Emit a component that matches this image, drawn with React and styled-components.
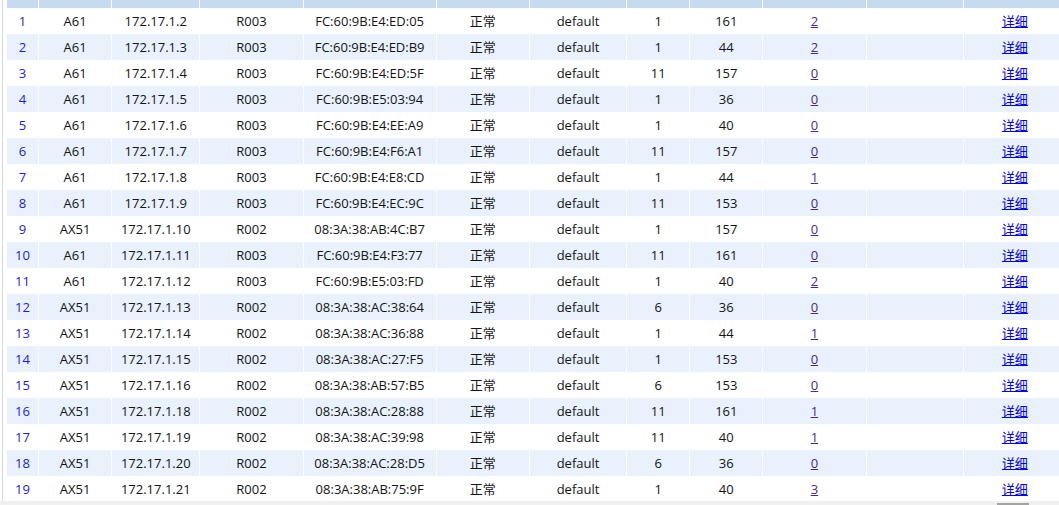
import React from "react";
import styled, { createGlobalStyle } from "styled-components";

const GlobalStyle = createGlobalStyle`
  html, body {
    margin: 0;
    padding: 0;
    background: #ffffff;
    overflow: hidden;
  }
  body {
    font-family: "Open Sans", "Noto Sans CJK SC", sans-serif;
    font-size: 13px;
  }
`;

const Page = styled.div`
  width: 1059px;
  height: 505px;
  display: flex;
  flex-direction: column;
  overflow: hidden;
`;

const Frame = styled.div`
  flex: 1;
  display: flex;
  padding-left: 2px;
  overflow: hidden;
`;

const Scroller = styled.div`
  flex: 1;
  border-left: 1px solid #d9d9d9;
  padding-left: 3px;
  overflow: hidden;
`;

const Table = styled.table`
  table-layout: fixed;
  border-collapse: separate;
  border-spacing: 1px 0;
  background: #ffffff;
  width: 1061px;
`;

const HeadCell = styled.th`
  height: 8px;
  padding: 0;
  background: #c6dbf0;
`;

const Row = styled.tr`
  background: ${(p) => (p.$alt ? "#e8f1fc" : "#ffffff")};
`;

const Cell = styled.td`
  height: 26px;
  padding: 0;
  text-align: center;
  vertical-align: middle;
  color: ${(p) => (p.$index ? "#1c1cdc" : "#141414")};
  white-space: nowrap;
  overflow: hidden;
  line-height: 26px;
`;

const CountLink = styled.a`
  color: #4a2a86;
  text-decoration: underline;
`;

const DetailLink = styled.a`
  color: #0000ee;
  text-decoration: underline;
`;

const Track = styled.div`
  height: 4px;
  background: #f0f0f0;
  display: flex;
  align-items: flex-end;
`;

const Thumb = styled.div`
  margin-left: 997px;
  width: 32px;
  height: 2px;
  background: #a3a3a3;
`;

const widths = [31, 72, 87, 102, 132, 92, 96, 62, 72, 102, 96, 102];

const rows = [
  ["A61", "172.17.1.2", "R003", "FC:60:9B:E4:ED:05", "1", "161", "2"],
  ["A61", "172.17.1.3", "R003", "FC:60:9B:E4:ED:B9", "1", "44", "2"],
  ["A61", "172.17.1.4", "R003", "FC:60:9B:E4:ED:5F", "11", "157", "0"],
  ["A61", "172.17.1.5", "R003", "FC:60:9B:E5:03:94", "1", "36", "0"],
  ["A61", "172.17.1.6", "R003", "FC:60:9B:E4:EE:A9", "1", "40", "0"],
  ["A61", "172.17.1.7", "R003", "FC:60:9B:E4:F6:A1", "11", "157", "0"],
  ["A61", "172.17.1.8", "R003", "FC:60:9B:E4:E8:CD", "1", "44", "1"],
  ["A61", "172.17.1.9", "R003", "FC:60:9B:E4:EC:9C", "11", "153", "0"],
  ["AX51", "172.17.1.10", "R002", "08:3A:38:AB:4C:B7", "1", "157", "0"],
  ["A61", "172.17.1.11", "R003", "FC:60:9B:E4:F3:77", "11", "161", "0"],
  ["A61", "172.17.1.12", "R003", "FC:60:9B:E5:03:FD", "1", "40", "2"],
  ["AX51", "172.17.1.13", "R002", "08:3A:38:AC:38:64", "6", "36", "0"],
  ["AX51", "172.17.1.14", "R002", "08:3A:38:AC:36:88", "1", "44", "1"],
  ["AX51", "172.17.1.15", "R002", "08:3A:38:AC:27:F5", "1", "153", "0"],
  ["AX51", "172.17.1.16", "R002", "08:3A:38:AB:57:B5", "6", "153", "0"],
  ["AX51", "172.17.1.18", "R002", "08:3A:38:AC:28:88", "11", "161", "1"],
  ["AX51", "172.17.1.19", "R002", "08:3A:38:AC:39:98", "11", "40", "1"],
  ["AX51", "172.17.1.20", "R002", "08:3A:38:AC:28:D5", "6", "36", "0"],
  ["AX51", "172.17.1.21", "R002", "08:3A:38:AB:75:9F", "1", "40", "3"],
];

export default function App() {
  return (
    <>
      <GlobalStyle />
      <Page>
        <Frame>
          <Scroller>
            <Table>
              <colgroup>
                {widths.map((w, i) => (
                  <col key={i} style={{ width: w }} />
                ))}
              </colgroup>
              <thead>
                <tr>
                  {widths.map((_, i) => (
                    <HeadCell key={i} />
                  ))}
                </tr>
              </thead>
              <tbody>
                {rows.map((r, i) => (
                  <Row key={i} $alt={i % 2 === 1}>
                    <Cell $index>{i + 1}</Cell>
                    <Cell>{r[0]}</Cell>
                    <Cell>{r[1]}</Cell>
                    <Cell>{r[2]}</Cell>
                    <Cell>{r[3]}</Cell>
                    <Cell>正常</Cell>
                    <Cell>default</Cell>
                    <Cell>{r[4]}</Cell>
                    <Cell>{r[5]}</Cell>
                    <Cell>
                      <CountLink href="#">{r[6]}</CountLink>
                    </Cell>
                    <Cell></Cell>
                    <Cell>
                      <DetailLink href="#">详细</DetailLink>
                    </Cell>
                  </Row>
                ))}
              </tbody>
            </Table>
          </Scroller>
        </Frame>
        <Track>
          <Thumb />
        </Track>
      </Page>
    </>
  );
}
